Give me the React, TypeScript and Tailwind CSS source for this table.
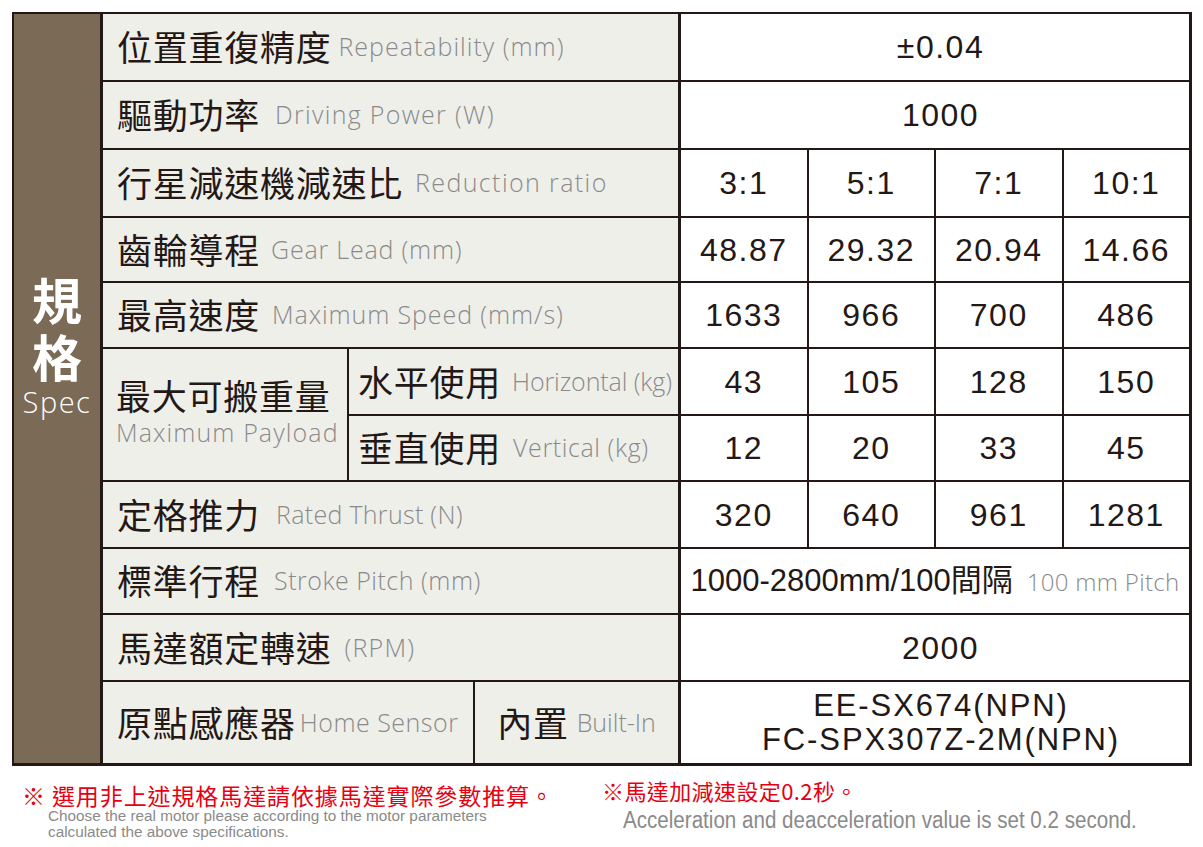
import React from "react";

const INK = "text-[#231815]";

type LabelProps = { zh: string; en: string; gap: string; track?: string };

function Label({ zh, en, gap, track = "tracking-[1px]" }: LabelProps) {
  return (
    <div className="whitespace-nowrap leading-[40px] pt-[6px]">
      <span className={`text-[35px] tracking-[0.75px] ${INK} font-['Noto_Sans_CJK_TC',sans-serif]`}>
        {zh}
      </span>
      <span
        className={`${gap} ${track} inline-block align-[5px] text-[25px] leading-[30px] font-light text-[#8a8a8a] font-['Open_Sans',sans-serif]`}
      >
        {en}
      </span>
    </div>
  );
}

function Single({ children }: { children: React.ReactNode }) {
  return (
    <div className={`h-full bg-white flex items-center justify-center pl-[11px] text-[32px] tracking-[1.5px] ${INK} font-['Liberation_Sans',Arial,'Noto_Sans_CJK_TC',sans-serif]`}>
      {children}
    </div>
  );
}

function Quad({ vals }: { vals: string[] }) {
  return (
    <div className="h-full grid grid-cols-4 gap-[2px] bg-[#231815]">
      {vals.map((v, i) => (
        <div
          key={i}
          className={`bg-white flex items-center justify-center text-[32px] tracking-[1.5px] ${INK} font-['Liberation_Sans',Arial,sans-serif]`}
        >
          {v}
        </div>
      ))}
    </div>
  );
}

function Row({ h, label, children }: { h: string; label: React.ReactNode; children: React.ReactNode }) {
  return (
    <div className={`flex ${h}`}>
      <div className="w-[575px] bg-[#efefea] flex items-center pl-[14px]">{label}</div>
      <div className="ml-[3px] w-[508px]">{children}</div>
    </div>
  );
}

export default function App() {
  return (
    <div className="w-[1203px] h-[847px] bg-white overflow-hidden font-['Noto_Sans_CJK_TC',sans-serif]">
      <div className="pl-[12px] pt-[12px]">
        <div className="flex w-[1180px] bg-[#231815] pt-[2px] pl-[2px] pr-[3px] pb-[3px]">
          {/* Brown side column */}
          <div className="w-[86px] bg-[#7a6a56] flex flex-col items-center pt-[256px] text-white">
            <div className="text-[50px] leading-[57px] font-bold font-['Noto_Sans_CJK_TC',sans-serif]">規</div>
            <div className="text-[50px] leading-[57px] font-bold font-['Noto_Sans_CJK_TC',sans-serif]">格</div>
            <div className="mt-[3px] text-[29px] leading-[30px] tracking-[1.5px] font-light font-['Open_Sans',sans-serif]">
              Spec
            </div>
          </div>

          {/* Table body */}
          <div className="ml-[3px] flex flex-col gap-[2px]">
            <Row h="h-[66px]" label={<Label zh="位置重復精度" en="Repeatability (mm)" gap="ml-[7px]" />}>
              <Single>±0.04</Single>
            </Row>
            <Row h="h-[66px]" label={<Label zh="驅動功率" en="Driving Power (W)" gap="ml-[15px]" track="tracking-[1.3px]" />}>
              <Single>1000</Single>
            </Row>
            <Row h="h-[66px]" label={<Label zh="行星減速機減速比" en="Reduction ratio" gap="ml-[12px]" track="tracking-[1.4px]" />}>
              <Quad vals={["3:1", "5:1", "7:1", "10:1"]} />
            </Row>
            <Row h="h-[63px]" label={<Label zh="齒輪導程" en="Gear Lead (mm)" gap="ml-[11px]" track="tracking-[0.8px]" />}>
              <Quad vals={["48.87", "29.32", "20.94", "14.66"]} />
            </Row>
            <Row h="h-[64px]" label={<Label zh="最高速度" en="Maximum Speed (mm/s)" gap="ml-[12px]" track="tracking-[0.9px]" />}>
              <Quad vals={["1633", "966", "700", "486"]} />
            </Row>

            {/* Payload block */}
            <div className="flex h-[131px]">
              <div className="w-[244px] bg-[#efefea] flex flex-col justify-center pl-[13px] pb-[8px]">
                <div className={`text-[35px] leading-[40px] tracking-[0.75px] ${INK}`}>最大可搬重量</div>
                <div className="mt-[2px] text-[25px] leading-[30px] tracking-[1.1px] font-light text-[#8a8a8a] font-['Open_Sans',sans-serif] whitespace-nowrap">
                  Maximum Payload
                </div>
              </div>
              <div className="ml-[2px] flex flex-col gap-[2px]">
                <div className="flex h-[65px]">
                  <div className="w-[329px] bg-[#efefea] flex items-center pl-[9px]">
                    <Label zh="水平使用" en="Horizontal (kg)" gap="ml-[11px]" track="tracking-[-0.1px]" />
                  </div>
                  <div className="ml-[3px] w-[508px]">
                    <Quad vals={["43", "105", "128", "150"]} />
                  </div>
                </div>
                <div className="flex h-[64px]">
                  <div className="w-[329px] bg-[#efefea] flex items-center pl-[9px]">
                    <Label zh="垂直使用" en="Vertical (kg)" gap="ml-[12px]" track="tracking-[0.6px]" />
                  </div>
                  <div className="ml-[3px] w-[508px]">
                    <Quad vals={["12", "20", "33", "45"]} />
                  </div>
                </div>
              </div>
            </div>

            <Row h="h-[65px]" label={<Label zh="定格推力" en="Rated Thrust (N)" gap="ml-[16px]" track="tracking-[0.3px]" />}>
              <Quad vals={["320", "640", "961", "1281"]} />
            </Row>
            <Row h="h-[64px]" label={<Label zh="標準行程" en="Stroke Pitch (mm)" gap="ml-[14px]" track="tracking-[0.5px]" />}>
              <div className={`h-full bg-white flex items-baseline justify-center pt-[13px] whitespace-nowrap ${INK}`}>
                <span className="text-[31px] leading-[38px] font-['Liberation_Sans',Arial,'Noto_Sans_CJK_TC',sans-serif]">
                  1000-2800mm/100間隔
                </span>
                <span className="ml-[14px] text-[24px] tracking-[0.3px] font-light text-[#8a8a8a] font-['Open_Sans',sans-serif]">
                  100 mm Pitch
                </span>
              </div>
            </Row>
            <Row h="h-[65px]" label={<Label zh="馬達額定轉速" en="(RPM)" gap="ml-[13px]" track="tracking-[1.2px]" />}>
              <Single>2000</Single>
            </Row>

            {/* Home sensor */}
            <div className="flex h-[81px]">
              <div className="w-[370px] bg-[#efefea] flex items-center pl-[14px]">
                <Label zh="原點感應器" en="Home Sensor" gap="ml-[4px]" track="tracking-[0.5px]" />
              </div>
              <div className="ml-[2px] w-[203px] bg-[#efefea] flex items-center justify-center">
                <Label zh="內置" en="Built-In" gap="ml-[8px]" track="tracking-[0px]" />
              </div>
              <div className="ml-[3px] w-[508px] bg-white flex flex-col items-center justify-center pl-[12px]">
                <div className={`text-[31px] leading-[34px] tracking-[1.9px] ${INK} font-['Liberation_Sans',Arial,sans-serif]`}>
                  EE-SX674(NPN)
                </div>
                <div className={`text-[31px] leading-[34px] tracking-[1.9px] ${INK} font-['Liberation_Sans',Arial,sans-serif]`}>
                  FC-SPX307Z-2M(NPN)
                </div>
              </div>
            </div>
          </div>
        </div>
      </div>

      {/* Notes */}
      <div className="flex pl-[22px]">
        <div className="w-[580px] mt-[17px]">
          <div className="text-[23px] leading-[24px] tracking-[0.9px] text-[#e60012] whitespace-nowrap font-['Noto_Sans_CJK_TC',sans-serif]">
            ※ 選用非上述規格馬達請依據馬達實際參數推算。
          </div>
          <div className="mt-[1px] pl-[26px] text-[15.3px] leading-[16px] text-[#8a8a8a] whitespace-nowrap font-['Liberation_Sans',Arial,sans-serif]">
            <div>Choose the real motor please according to the motor parameters</div>
            <div>calculated the above specifications.</div>
          </div>
        </div>
        <div className="mt-[11px]">
          <div className="text-[22px] leading-[26px] tracking-[0.4px] text-[#e60012] whitespace-nowrap font-['Noto_Sans_CJK_TC',sans-serif]">
            ※馬達加減速設定0.2秒。
          </div>
          <div className="pl-[21px] mt-[4px] text-[23px] leading-[26px] text-[#8a8a8a] whitespace-nowrap font-['Liberation_Sans',Arial,sans-serif]">
            <div className="origin-left scale-x-[0.895]">Acceleration and deacceleration value is set 0.2 second.</div>
          </div>
        </div>
      </div>
    </div>
  );
}
